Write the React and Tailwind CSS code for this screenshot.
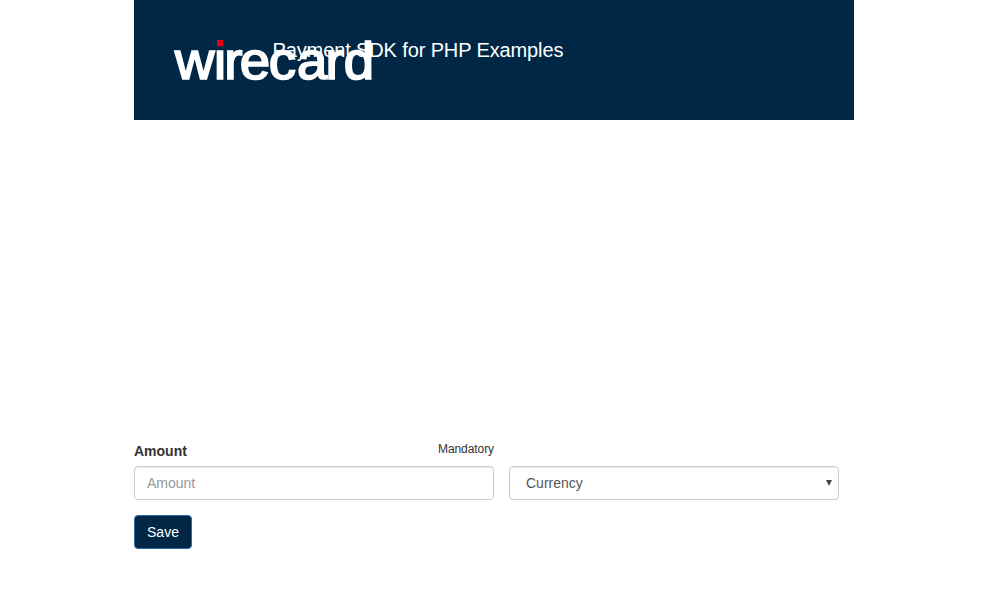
function Logo() {
  return (
    <svg
      width="200"
      height="40"
      viewBox="0 0 200 40"
      className="block overflow-visible"
      aria-label="wirecard"
    >
      <text
        x="0.9 38.9 48.9 63.9 91.9 119.4 147.2 164.7"
        y="39.7"
        transform="scale(1.03 0.97)"
        fill="#fff"
        stroke="#fff"
        strokeWidth="1.8"
        fontSize="53"
        fontFamily="'Liberation Sans', Arial, sans-serif"
      >
        wirecard
      </text>
      <rect x="42" y="-4" width="9" height="13" fill="#002846" />
      <rect x="43" y="0" width="6.4" height="6.2" fill="#e2000f" />
    </svg>
  );
}

export default function App() {
  return (
    <div className="min-h-screen bg-white font-['Liberation_Sans',Arial,sans-serif] text-sm leading-5 text-[#333]">
      <div className="mx-auto w-[720px]">
        <header className="relative h-[120px] bg-[#002846] p-10">
          <Logo />
          <h1 className="absolute left-[138.5px] top-[39px] text-[20px] leading-[22px] tracking-[-0.12px] whitespace-nowrap text-white">
            Payment SDK for PHP Examples
          </h1>
        </header>
        <form className="pt-[321px]">
          <div className="flex items-end gap-[15px]">
            <div className="w-[360px]">
              <div className="mb-[5px] flex h-5 justify-between">
                <label htmlFor="amount" className="font-bold">Amount</label>
                <span className="-mt-0.5 text-xs leading-5 tracking-[-0.08px]">Mandatory</span>
              </div>
              <input
                id="amount"
                placeholder="Amount"
                className="block h-[34px] w-full rounded-[4px] border border-[#ccc] bg-white px-3 py-1.5 text-sm text-[#555] shadow-[inset_0_1px_1px_rgba(0,0,0,0.075)] placeholder:text-[#999]"
              />
            </div>
            <div className="flex h-[34px] w-[330px] items-center justify-between rounded-[4px] border border-[#ccc] bg-white pl-4 pr-[5px] text-[#555] shadow-[inset_0_1px_1px_rgba(0,0,0,0.075)]">
              <span>Currency</span>
              <svg width="8" height="6" viewBox="0 0 8 6" fill="#444">
                <path d="M1 0H7L4 6Z" />
              </svg>
            </div>
          </div>
          <button
            type="button"
            className="mt-[15px] h-[34px] w-[58px] rounded-[4px] border border-[#2e6da4] bg-[#002846] text-sm text-white"
          >
            Save
          </button>
        </form>
      </div>
    </div>
  );
}
